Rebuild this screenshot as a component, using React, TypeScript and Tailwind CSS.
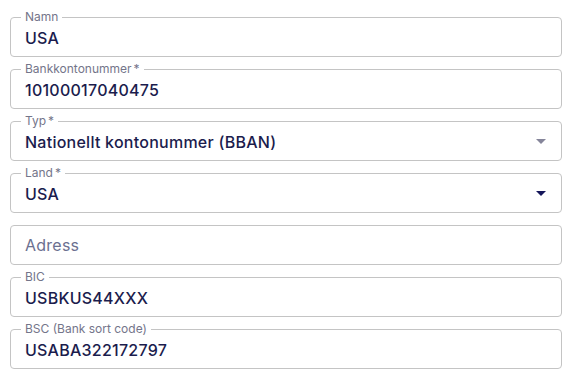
import React from 'react'

type FieldProps = {
  label?: string
  required?: boolean
  value?: string
  placeholder?: string
  select?: 'muted' | 'active'
}

function Field({ label, required, value, placeholder, select }: FieldProps) {
  return (
    <div className="relative h-[40px] rounded-[4px] border border-[#c4c4c4] flex items-center pl-[14px] pr-[14px]">
      {label && (
        <span className="absolute -top-[8px] left-[10px] bg-white px-[4px] text-[12px] leading-[14px] text-[#74758a]">
          {label}
          {required && <span className="ml-[2px]">*</span>}
        </span>
      )}
      {value ? (
        <span className="flex-1 text-[16px] font-medium tracking-[0.25px] text-[#1b1c4d] pt-[2px]">{value}</span>
      ) : (
        <span className="flex-1 text-[16px] tracking-[0.25px] text-[#6b7090]">{placeholder}</span>
      )}
      {select && (
        <svg width="10" height="5" viewBox="0 0 10 5" className="mr-[1px] mt-[1px]">
          <path d="M0 0h10L5 5z" fill={select === 'active' ? '#15165a' : '#85859a'} />
        </svg>
      )}
    </div>
  )
}

export default function App() {
  return (
    <div
      className="w-[574px] h-[376px] bg-white pl-[10px] pr-[12px] pt-[17px] flex flex-col gap-[12px]"
      style={{ fontFamily: 'Inter, "Noto Sans", sans-serif' }}
    >
      <Field label="Namn" value="USA" />
      <Field label="Bankkontonummer" required value="10100017040475" />
      <Field label="Typ" required value="Nationellt kontonummer (BBAN)" select="muted" />
      <Field label="Land" required value="USA" select="active" />
      <Field placeholder="Adress" />
      <Field label="BIC" value="USBKUS44XXX" />
      <Field label="BSC (Bank sort code)" value="USABA322172797" />
    </div>
  )
}
